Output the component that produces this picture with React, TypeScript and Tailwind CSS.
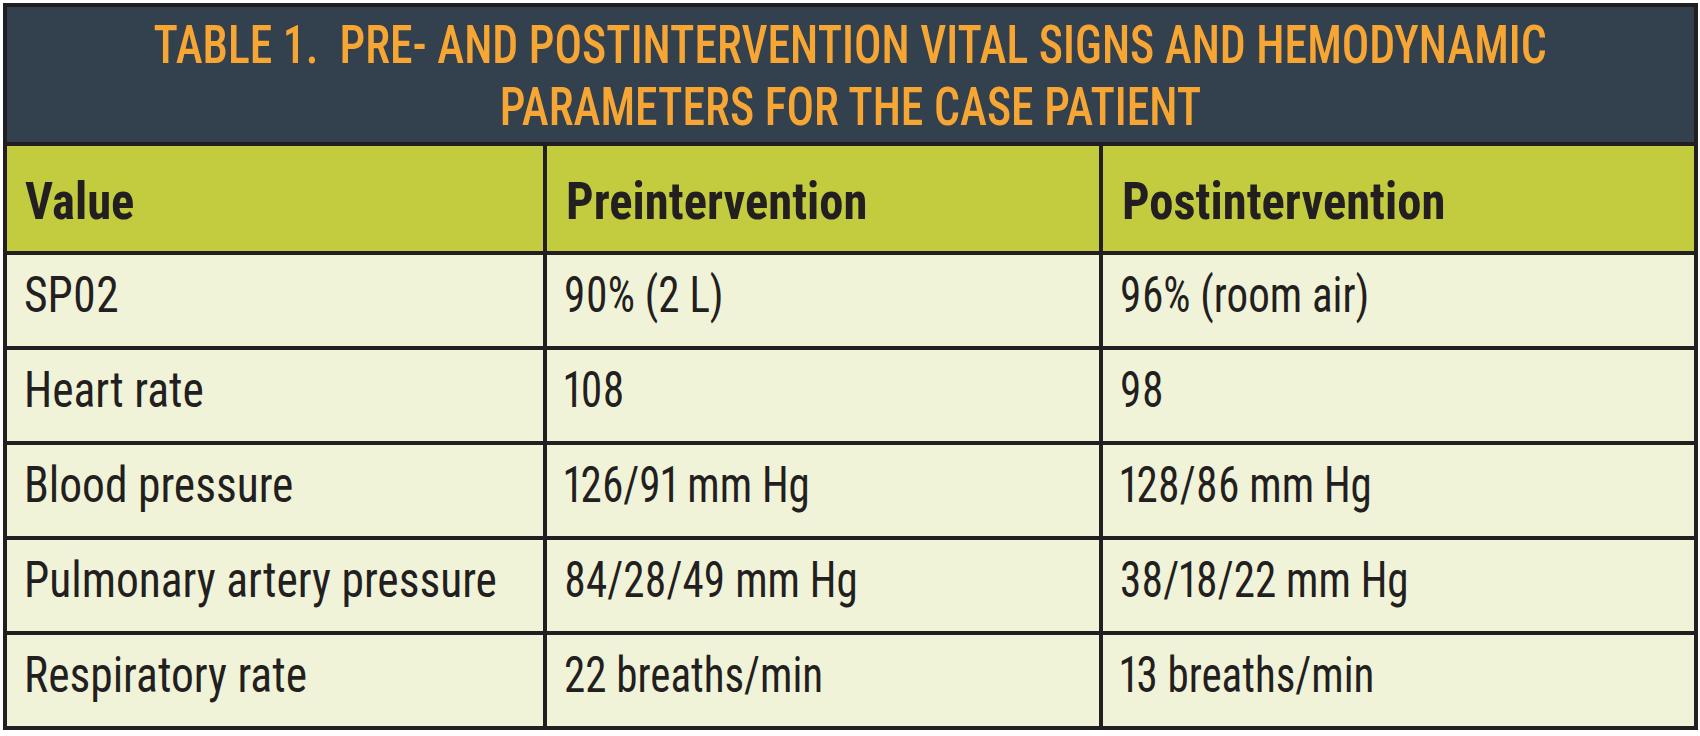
const rows = [
  ['SP02', '90% (2 L)', '96% (room air)'],
  ['Heart rate', '108', '98'],
  ['Blood pressure', '126/91 mm Hg', '128/86 mm Hg'],
  ['Pulmonary artery pressure', '84/28/49 mm Hg', '38/18/22 mm Hg'],
  ['Respiratory rate', '22 breaths/min', '13 breaths/min'],
];

const heads = ['Value', 'Preintervention', 'Postintervention'];

export default function App() {
  return (
    <div className="w-[1700px] h-[736px] bg-white pt-[3px] pl-[3px] font-['Roboto_Condensed','Liberation_Sans_Narrow','DejaVu_Sans_Condensed',sans-serif] font-stretch-condensed text-[#231f20]">
      <div className="w-[1695px] border-4 border-[#231f20] bg-[#231f20]">
        {/* Title */}
        <div className="h-[135px] pt-[3px] bg-[#33414f] flex flex-col items-center justify-center text-[#f7a633] text-[53px] leading-[62px] font-medium uppercase whitespace-nowrap">
          <span className="inline-block scale-x-[0.863]">Table 1.&nbsp; Pre- and postintervention vital signs and hemodynamic</span>
          <span className="inline-block scale-x-[0.863]">parameters for the case patient</span>
        </div>

        <div className="mt-[4px] grid grid-cols-[536px_552px_1fr] gap-[4px]">
          {heads.map((h, i) => (
            <div key={h} className={`h-[105px] pt-[6px] bg-[#c3cc3f] flex items-center text-[52px] font-bold whitespace-nowrap ${i === 0 ? 'pl-[18px]' : 'pl-[19px]'}`}>
              <span className="inline-block origin-left scale-x-[0.935]">{h}</span>
            </div>
          ))}
          {rows.map((r) =>
            r.map((c, i) => (
              <div key={r[0] + i} className="h-[91px] pb-[10px] bg-[#f1f3d8] flex items-center pl-[17px] text-[50px] whitespace-nowrap proportional-nums">
                <span className={`inline-block origin-left ${i === 0 ? 'scale-x-[0.91]' : 'scale-x-[0.86]'}`}>{c}</span>
              </div>
            ))
          )}
        </div>
      </div>
    </div>
  );
}
